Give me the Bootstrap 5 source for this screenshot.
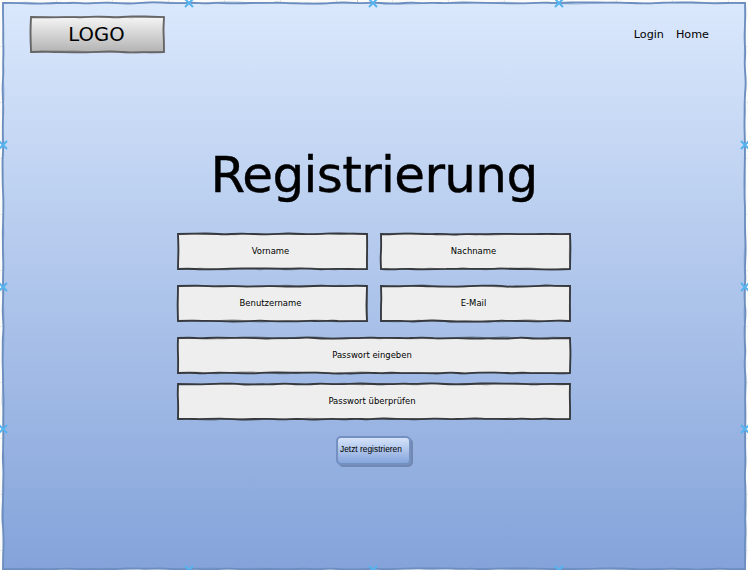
<!DOCTYPE html>
<html lang="de">
<head>
<meta charset="utf-8">
<meta name="viewport" content="width=device-width, initial-scale=1">
<title>Registrierung</title>
<link rel="stylesheet" href="https://cdn.jsdelivr.net/npm/bootstrap@5.3.0/dist/css/bootstrap.min.css">
<style>
  html, body { height: 100%; }
  body {
    font-family: Verdana, "DejaVu Sans", sans-serif;
    color: #000;
    background:
      linear-gradient(#c8c8c8, #c8c8c8) 357px 0 / 1px 3px no-repeat,
      repeating-linear-gradient(90deg, transparent 0 55px, #e9e9e9 55px 56px) 1px 0,
      repeating-linear-gradient(transparent 0 55px, #e9e9e9 55px 56px) 0 -9px,
      #fbfbfa;
  }
  .screen {
    width: 742px; height: 566px; margin: 3px 0 0 3px;
    background: linear-gradient(#dae8fc, #84a3da);
  }
  .outline { left: 0; top: 0; overflow: visible; pointer-events: none; }
  .topbar { padding: 14px 36px 0 28px; }
  .logo-box { width: 133px; height: 35px; padding-right: 2px; font-size: 19.6px; background: linear-gradient(#f5f5f5, #b3b3b3); }
  .logo-box span { letter-spacing: .1px; }
  .topbar a { font-size: 11.2px; color: #000; line-height: 14px; }
  .topbar nav { gap: 12px; margin-top: 1px; }
  .heading { font-size: 50px; line-height: 60px; letter-spacing: -.65px; -webkit-text-stroke: .4px #000; margin: 93px 0 0 0; }
  .signup { width: 392px; margin: 29px 0 0 175px; }
  .pair { gap: 14px; margin-bottom: 17px; }
  .field { height: 35px; padding-right: 4px; background: #eee; font-size: 8.45px; }
  .field + .field.stacked { margin-top: 11px; }
  .submit {
    width: 75px; height: 29px; margin-left: 158px; margin-top: 17px; padding: 0 0 3px 2px;
    font: 8.4px/10px "Liberation Sans", Arial, sans-serif;
    border: 2px solid #7390c1; border-radius: 5px;
    background: linear-gradient(#d5e3f9, #86a5dc);
    box-shadow: 2px 2px 0 #7188b3;
    color: #000;
  }
</style>
</head>
<body class="overflow-hidden">
<main class="screen position-relative" data-sketch="#6c8ebf" data-seed="3">
  <header class="topbar d-flex justify-content-between align-items-center">
    <div class="logo-box position-relative d-flex align-items-center justify-content-center" data-sketch="#666" data-seed="11"><span class="position-relative">LOGO</span></div>
    <nav class="d-flex">
      <a class="text-decoration-none" href="#">Login</a>
      <a class="text-decoration-none" href="#">Home</a>
    </nav>
  </header>
  <h1 class="heading fw-normal text-center text-nowrap">Registrierung</h1>
  <form class="signup">
    <div class="pair d-flex">
      <label class="field flex-fill w-50 position-relative d-flex align-items-center justify-content-center" data-sketch="#36393d" data-seed="21"><span>Vorname</span></label>
      <label class="field flex-fill w-50 position-relative d-flex align-items-center justify-content-center" data-sketch="#36393d" data-seed="35"><span>Nachname</span></label>
    </div>
    <div class="pair d-flex">
      <label class="field flex-fill w-50 position-relative d-flex align-items-center justify-content-center" data-sketch="#36393d" data-seed="47"><span>Benutzername</span></label>
      <label class="field flex-fill w-50 position-relative d-flex align-items-center justify-content-center" data-sketch="#36393d" data-seed="59"><span>E-Mail</span></label>
    </div>
    <label class="field stacked position-relative d-flex align-items-center justify-content-center" data-sketch="#36393d" data-seed="63"><span>Passwort eingeben</span></label>
    <label class="field stacked position-relative d-flex align-items-center justify-content-center" data-sketch="#36393d" data-seed="77"><span>Passwort überprüfen</span></label>
    <button type="button" class="submit d-flex align-items-center text-nowrap">Jetzt registrieren</button>
  </form>
  <svg class="outline position-absolute" id="anchors" width="742" height="566" fill="none" stroke="#55b4f0" stroke-width="2"></svg>
</main>
<script src="https://cdn.jsdelivr.net/npm/bootstrap@5.3.0/dist/js/bootstrap.bundle.min.js"></script>
<script>
  const NS = 'http://www.w3.org/2000/svg';
  function addPath(svg, attrs) {
    const p = document.createElementNS(NS, 'path');
    for (const k in attrs) p.setAttribute(k, attrs[k]);
    svg.appendChild(p);
  }
  // Hand-drawn rectangle: each side is a smooth curve through slightly displaced points.
  function wobble(w, h, seed, amp) {
    let s = seed * 7919;
    const rnd = () => (s = (s * 16807 + 11) % 2147483647) / 2147483647;
    for (let i = 0; i < 5; i++) rnd();
    const c = [[0, 0], [w, 0], [w, h], [0, h], [0, 0]];
    let d = 'M0 0';
    for (let i = 0; i < 4; i++) {
      const [ax, ay] = c[i], [bx, by] = c[i + 1];
      const len = Math.hypot(bx - ax, by - ay), n = Math.max(2, Math.round(len / 12));
      const pts = [];
      for (let j = 1; j < n; j++) {
        const t = (j + (rnd() - .5) * .4) / n, o = (rnd() - .5) * 2 * amp;
        pts.push([ax + (bx - ax) * t + (by !== ay ? o : 0), ay + (by - ay) * t + (bx !== ax ? o : 0)]);
      }
      pts.forEach((p, j) => {
        const q = pts[j + 1];
        const e = q ? [(p[0] + q[0]) / 2, (p[1] + q[1]) / 2] : [bx, by];
        d += `Q${p[0].toFixed(1)} ${p[1].toFixed(1)} ${e[0].toFixed(1)} ${e[1].toFixed(1)}`;
      });
    }
    return d + 'Z';
  }
  document.querySelectorAll('[data-sketch]').forEach(el => {
    const w = el.clientWidth, h = el.clientHeight, seed = +el.dataset.seed;
    const svg = document.createElementNS(NS, 'svg');
    svg.setAttribute('class', 'outline position-absolute');
    svg.setAttribute('width', w); svg.setAttribute('height', h);
    const base = { fill: 'none', stroke: el.dataset.sketch };
    addPath(svg, { ...base, d: wobble(w, h, seed, .9), 'stroke-width': 1.4, 'stroke-opacity': .5 });
    addPath(svg, { ...base, d: wobble(w, h, seed + 100, .7), 'stroke-width': 1.8 });
    el.prepend(svg);
  });
  // Connection points around the frame.
  const cross = (x, y) => `M${x - 4} ${y - 4}l8 8m0 -8l-8 8`;
  let marks = '';
  [186, 370, 556].forEach(x => marks += cross(x, 0) + cross(x, 567));
  [142, 284, 426].forEach(y => marks += cross(0, y) + cross(742, y));
  addPath(document.getElementById('anchors'), { d: marks });
</script>
</body>
</html>
